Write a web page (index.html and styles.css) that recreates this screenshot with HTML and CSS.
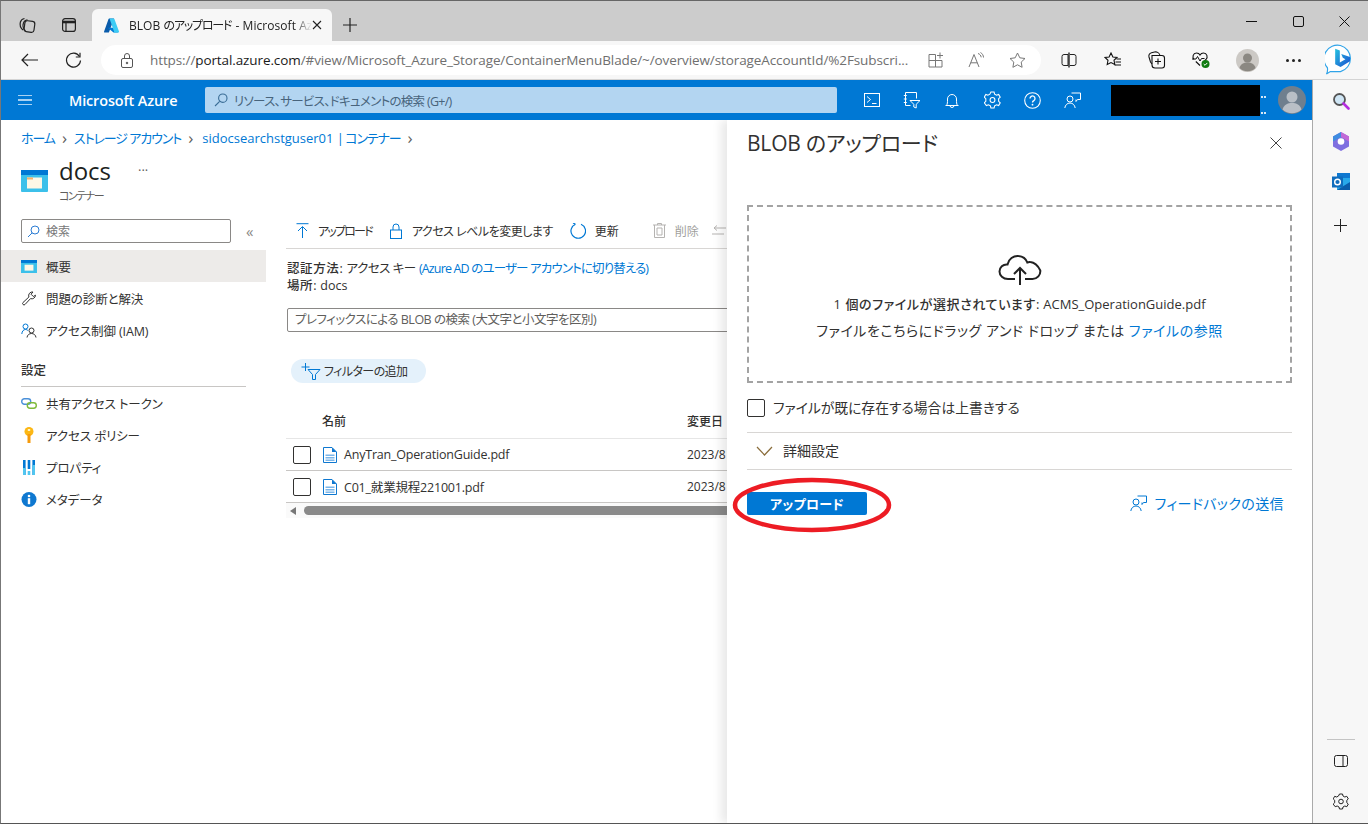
FILE: index.html
```html
<!DOCTYPE html>
<html lang="ja">
<head>
<meta charset="utf-8">
<title>BLOB のアップロード - Microsoft Azure</title>
<link rel="stylesheet" href="styles.css">
</head>
<body>
<div class="window">
  <header class="tabstrip">
    <div class="strip-icon">
      <svg width="18" height="18" viewBox="0 0 18 18" fill="none" stroke="#222" stroke-width="1.2"><rect x="6.5" y="5" width="10" height="11" rx="2.5" transform="rotate(8 11 10)"/><path d="M5 14C2.5 12 1.6 9 2.4 6 3 4 4.600 2.800 6.500 2.500"/><path d="M7.500 15C5.500 13 4.500 10 5.300 7.500 5.800 5.500 7.500 4 9.500 3.800"/></svg>
    </div>
    <div class="strip-icon">
      <svg width="16" height="16" viewBox="0 0 16 16" fill="none" stroke="#222" stroke-width="1.2"><rect x="1.600" y="1.600" width="12.800" height="12.800" rx="2.500"/><path d="M1.600 5h12.800" stroke-width="2.600"/><path d="M5 5v9.400"/></svg>
    </div>
    <div class="tab">
      <svg class="tab-logo" width="16" height="15" viewBox="0 0 18 16"><path d="M6 0h5.300L5.700 15.300a1 1 0 0 1-.9.700H.9a.9.9 0 0 1-.8-1.200L5.100.7A1 1 0 0 1 6 0z" fill="#0a5cab"/><path d="M13.700 10.400H5.200a.4.4 0 0 0-.3.700l5.500 4.600a1 1 0 0 0 .6.300h4.800z" fill="#0078d4"/><path d="M10.800 0a1 1 0 0 1 .9.700l5.200 14.100a.9.900 0 0 1-.8 1.200h-5.600a1 1 0 0 0 .8-1.200L6.200 0z" fill="#3ccbf4"/></svg>
      <span class="tab-title">BLOB <span class="tab-kana">のアップロード</span> - Microsoft Azure</span>
      <svg class="tab-close" width="10" height="10" viewBox="0 0 10 10" stroke="#222" stroke-width="1.100"><path d="M1 1l8 8M9 1l-8 8"/></svg>
    </div>
    <div class="strip-new">
      <svg width="14" height="14" viewBox="0 0 14 14" stroke="#222" stroke-width="1.200"><path d="M7 0v14M0 7h14"/></svg>
    </div>
    <div class="strip-fill"></div>
    <div class="win-btn"><svg width="11" height="11" viewBox="0 0 11 11" stroke="#111"><path d="M0 5.500h11"/></svg></div>
    <div class="win-btn"><svg width="11" height="11" viewBox="0 0 11 11" fill="none" stroke="#111"><rect x=".5" y=".5" width="10" height="10" rx="1.500"/></svg></div>
    <div class="win-btn"><svg width="11" height="11" viewBox="0 0 11 11" stroke="#111"><path d="M.5.500l10 10M10.500.500l-10 10"/></svg></div>
  </header>

  <div class="toolbar">
    <div class="nav-btn"><svg width="17" height="14" viewBox="0 0 17 14" fill="none" stroke="#222" stroke-width="1.200"><path d="M17 7H1M7 1L1 7l6 6"/></svg></div>
    <div class="nav-btn"><svg width="17" height="17" viewBox="0 0 17 17" fill="none" stroke="#222" stroke-width="1.200"><path d="M14.500 4.500A7 7 0 1 0 15.500 8.500"/><path d="M15 .8v4.200h-4.200"/></svg></div>
    <div class="omnibox">
      <svg class="lock" width="12" height="15" viewBox="0 0 12 15" fill="none" stroke="#555"><rect x=".5" y="5.500" width="11" height="9" rx="1.500"/><path d="M3.500 5.500V3a2.500 2.500 0 0 1 5 0v2.500"/><circle cx="6" cy="10" r=".8" fill="#555"/></svg>
      <span class="url"><span class="url-dim">https://</span><span class="url-host">portal.azure.com</span><span class="url-dim">/#view/Microsoft_Azure_Storage/ContainerMenuBlade/~/overview/storageAccountId/%2Fsubscri...</span></span>
      <div class="omni-icons">
        <svg width="16" height="16" viewBox="0 0 16 16" fill="none" stroke="#777"><path d="M1 2.500h6.500V15H1zM7.500 8.500H14V15H7.500zM1 8.500h6.500"/><path d="M12 .5v6M9 3.500h6"/></svg>
        <svg width="17" height="16" viewBox="0 0 17 16" fill="none" stroke="#777"><path d="M1 15L6 2.500 11 15M2.800 10.800h6.400"/><path d="M10 1.500c1.800.5 3 2 3.200 3.800M12.500.500c1.800 1 3 3 3 5"/></svg>
        <svg width="17" height="16" viewBox="0 0 17 16" fill="none" stroke="#777"><path d="M8.500 1l2.300 4.800 5.200.7-3.800 3.600.9 5.200-4.600-2.500-4.600 2.500.9-5.200L1 6.500l5.200-.7z"/></svg>
      </div>
    </div>
    <div class="tool-icons">
      <div class="tool-btn"><svg width="16" height="16" viewBox="0 0 16 16" fill="none" stroke="#222"><path d="M7 2.500H3A2 2 0 0 0 1 4.500v7a2 2 0 0 0 2 2h4zM9 2.500h4a2 2 0 0 1 2 2v7a2 2 0 0 1-2 2H9"/><path d="M8 .5v15" stroke-width="1.400"/></svg></div>
      <div class="tool-btn"><svg width="18" height="16" viewBox="0 0 18 16" fill="none" stroke="#111" stroke-width="1.100"><path d="M7 1l1.900 4 4.100.5-3 2.800.8 4.200L7 10.500l-3.800 2 .8-4.200-3-2.800L5.100 5z"/><path d="M12.500 7H17M11.500 10H17M10.500 13H17"/></svg></div>
      <div class="tool-btn"><svg width="18" height="18" viewBox="0 0 18 18" fill="none" stroke="#111" stroke-width="1.100"><path d="M4 4.500V14a3 3 0 0 0 3 3h7a2.500 2.500 0 0 0 2.500-2.500V7A2.500 2.500 0 0 0 14 4.500z"/><path d="M12 4.500C11.500 2 9 .5 6.500 1L3.500 1.700C1.500 2.200.5 4 1 6l1.500 5 1.500 2"/><path d="M10 7.500v6M7 10.500h6"/></svg></div>
      <div class="tool-btn"><svg width="20" height="20" viewBox="0 0 20 20"><path d="M3 9.500C1 7 2 3 5.500 3c1.800 0 3 1 3.500 2 .6-1 1.800-2 3.500-2C16 3 17.200 7 15 9.500L13.500 11M4.800 11.500 9 15.500" fill="none" stroke="#111" stroke-width="1.100"/><path d="M1 9h4l1.500-2.500L9 11l1.500-2.500h3" fill="none" stroke="#111"/><circle cx="14.500" cy="14" r="4" fill="#107c10"/><path d="M12.700 14l1.300 1.300 2.300-2.400" fill="none" stroke="#fff"/></svg></div>
      <div class="tool-btn profile"><svg width="23" height="23" viewBox="0 0 23 23"><circle cx="11.500" cy="11.500" r="11.500" fill="#ccc9c5"/><circle cx="11.500" cy="9" r="4.500" fill="#8b8882"/><path d="M3.500 19c1-4 4-5.500 8-5.500s7 1.500 8 5.500a11.500 11.500 0 0 1-16 0z" fill="#8b8882"/></svg></div>
      <div class="tool-btn more"><span class="dot"></span><span class="dot"></span><span class="dot"></span></div>
    </div>
    <div class="bing-slot">
      <svg width="31" height="32" viewBox="0 0 32 32"><defs><linearGradient id="bing" x1="0" y1="0" x2="1" y2="1"><stop offset="0" stop-color="#26c2e0"/><stop offset="1" stop-color="#1b4fd0"/></linearGradient></defs><path d="M16 1a14 14 0 0 1 0 27H5.500L1.500 30.500C3 28 2.800 26 2.500 24A14 14 0 0 1 16 1z" fill="#fff" stroke="#2fa3e8" stroke-width="1.200"/><path d="M10.500 4.500l4.800 1.700v12.300l5.800-3.400-2.700-1.300-1.600-4.100 9 3.200v4.500l-9.700 5.900-5.600-3z" fill="url(#bing)"/></svg>
    </div>
  </div>

  <div class="body-row">
    <div class="portal">
      <nav class="topnav">
        <div class="hamburger"><span></span><span></span><span></span></div>
        <div class="brand">Microsoft Azure</div>
        <div class="globalsearch">
          <svg width="14" height="14" viewBox="0 0 14 14" fill="none" stroke="#3a6d96" stroke-width="1.100"><circle cx="8.800" cy="5.200" r="4.200"/><path d="M5.700 8.300L1 13"/></svg>
          <span>リソース、サービス、ドキュメントの検索 (G+/)</span>
        </div>
        <div class="nav-icons">
          <div class="nav-icon"><svg width="16" height="14" viewBox="0 0 16 14" fill="none" stroke="#fff"><rect x=".5" y=".5" width="15" height="13"/><path d="M3 3.500l3.500 3-3.500 3M8 10.500h4.500"/></svg></div>
          <div class="nav-icon"><svg width="18" height="18" viewBox="0 0 18 18" fill="none" stroke="#fff"><path d="M2.500 1.500h11v6M2.500 1.500v13h5M.8 4.500h3M.8 8h3M.8 11.500h3"/><path d="M7 9.500h10l-3.800 3.800v3.700l-2.400-1v-2.700z" fill="#0078d4"/></svg></div>
          <div class="nav-icon"><svg width="14" height="17" viewBox="0 0 14 17" fill="none" stroke="#fff"><path d="M1.500 13.500C2.500 12 2.500 10.500 2.500 7a4.500 4.500 0 0 1 9 0c0 3.500 0 5 1 6.500zM.5 13.500h13M5 13.500a2 2 0 0 0 4 0"/></svg></div>
          <div class="nav-icon"><svg width="17" height="18" viewBox="0 0 16 17" fill="none" stroke="#fff"><circle cx="8" cy="8.500" r="2.300"/><path d="M6.500 1h3l.5 2 1.800 1 2-.7 1.500 2.600-1.500 1.400v2.400l1.500 1.400-1.500 2.600-2-.7-1.800 1-.5 2h-3l-.5-2-1.800-1-2 .7L.2 11.100l1.500-1.400V7.300L.2 5.900l1.500-2.600 2 .7L5.500 3z"/></svg></div>
          <div class="nav-icon"><svg width="17" height="17" viewBox="0 0 17 17" fill="none" stroke="#fff" stroke-width="1.100"><circle cx="8.500" cy="8.500" r="7.800"/><path d="M6 6.500a2.500 2.500 0 1 1 3.800 2.100c-.9.500-1.300 1-1.300 2" stroke-width="1.300"/><circle cx="8.500" cy="12.700" r=".9" fill="#fff" stroke="none"/></svg></div>
          <div class="nav-icon"><svg width="17" height="17" viewBox="0 0 17 17" fill="none" stroke="#fff"><circle cx="6" cy="7" r="3"/><path d="M.8 16c.4-3 2.500-5 5.200-5s4.800 2 5.200 5M7.500 1h9v6.500h-3L12 9.500V7.500"/></svg></div>
        </div>
        <div class="account">
          <div class="redacted"></div>
          <div class="acct-dots"><span></span><span></span></div>
        </div>
        <div class="avatar"><svg width="28" height="28" viewBox="0 0 28 28"><circle cx="14" cy="14" r="14" fill="#6f7f8e"/><circle cx="14" cy="11" r="5.500" fill="#b9bfc6"/><path d="M4.500 23.500C6 18.500 9.500 17 14 17s8 1.500 9.500 6.500a14 14 0 0 1-19 0z" fill="#b9bfc6"/></svg></div>
      </nav>

      <main class="workspace">
        <div class="breadcrumb">
          <a class="crumb-kana">ホーム</a><i>›</i><a class="crumb-kana">ストレージ アカウント</a><i class="crumb-gap">›</i><a class="crumb-last">sidocsearchstguser01 <span class="crumb-kana">| コンテナー</span></a><i>›</i>
        </div>
        <div class="pagehead">
          <svg class="container-icon" width="27" height="22" viewBox="0 0 27 22"><rect width="27" height="22" rx="1" fill="#3cc0ea"/><rect width="27" height="5" fill="#0078d4"/><rect x="6" y="7.500" width="15" height="11" fill="#fdf7e6"/><rect x="6" y="7.500" width="6" height="2" fill="#f6b26b"/></svg>
          <div class="head-text">
            <div class="head-title"><span class="doc-name">docs</span><span class="head-more">···</span></div>
            <div class="head-sub">コンテナー</div>
          </div>
        </div>
        <div class="split">
          <aside class="sidemenu">
            <div class="side-search-row">
              <div class="side-search">
                <svg width="13" height="13" viewBox="0 0 13 13" fill="none" stroke="#2b7cd3"><circle cx="8" cy="5" r="4"/><path d="M5.200 7.800L1 12"/></svg>
                <span>検索</span>
              </div>
              <span class="collapse">«</span>
            </div>
            <div class="menu">
              <div class="menu-item active"><svg width="15" height="13" viewBox="0 0 27 22"><rect width="27" height="22" fill="#3cc0ea"/><rect width="27" height="5" fill="#0078d4"/><rect x="6" y="8" width="15" height="10" fill="#fdf7e6"/></svg><span>概要</span></div>
              <div class="menu-item"><svg width="15" height="15" viewBox="0 0 15 15" fill="none" stroke="#333"><path d="M14 4.200a3.700 3.700 0 0 1-5 3.400L3.500 13.500a1.400 1.400 0 0 1-2-2L7.400 6A3.700 3.700 0 0 1 11.500 1L9.500 3.200l2.300 2.300z"/></svg><span>問題の診断と解決</span></div>
              <div class="menu-item"><svg width="16" height="15" viewBox="0 0 16 15" fill="none" stroke="#0078d4"><circle cx="4.500" cy="3.500" r="2.500"/><path d="M.8 11c.2-2.800 1.700-4.500 3.700-4.500 1 0 1.800.3 2.400 1"/><circle cx="10.500" cy="7.500" r="2.500" stroke="#333"/><path d="M6 14.500c.3-2.500 2.200-4 4.500-4s4.200 1.500 4.500 4" stroke="#333"/></svg><span>アクセス制御 (IAM)</span></div>
            </div>
            <div class="menu-head">設定</div>
            <div class="menu">
              <div class="menu-item"><svg width="16" height="11" viewBox="0 0 16 11" fill="none" stroke-width="1.400"><rect x=".7" y=".7" width="9" height="5.500" rx="2.700" stroke="#4a90d9"/><rect x="6.300" y="4.700" width="9" height="5.500" rx="2.700" stroke="#7fba3a"/></svg><span>共有アクセス トークン</span></div>
              <div class="menu-item"><svg width="15" height="16" viewBox="0 0 15 16"><circle cx="7.500" cy="4.500" r="4.500" fill="#fcb714"/><rect x="6" y="7" width="3" height="9" fill="#f59a0c"/><rect x="6.300" y="2" width="2.400" height="2" fill="#fff3c9"/></svg><span>アクセス ポリシー</span></div>
              <div class="menu-item"><svg width="14" height="15" viewBox="0 0 14 15"><rect x="1" width="2.600" height="15" fill="#0078d4"/><rect x="1" y="8" width="2.600" height="7" fill="#50c7f0"/><rect x="5.700" width="2.600" height="9" fill="#0078d4"/><rect x="5.700" y="11" width="2.600" height="4" fill="#50c7f0"/><rect x="10.400" width="2.600" height="15" fill="#0078d4"/><rect x="10.400" y="5" width="2.600" height="10" fill="#50c7f0"/></svg><span>プロパティ</span></div>
              <div class="menu-item"><svg width="15" height="15" viewBox="0 0 15 15"><circle cx="7.500" cy="7.500" r="7.500" fill="#0f78d0"/><circle cx="7.500" cy="4" r="1.300" fill="#fff"/><rect x="6.300" y="6.200" width="2.400" height="6" fill="#fff"/></svg><span>メタデータ</span></div>
            </div>
          </aside>

          <section class="maincol">
            <div class="cmdbar">
              <div class="cmd"><svg width="13" height="15" viewBox="0 0 13 15" fill="none" stroke="#0078d4"><path d="M.5.700h12M6.500 15V4M2 8l4.500-4.500L11 8"/></svg><span class="tight-upload">アップロード</span></div>
              <div class="cmd"><svg width="14" height="16" viewBox="0 0 14 16" fill="none" stroke="#0078d4"><rect x="1.500" y="7" width="11" height="8.500"/><path d="M4 7V4a3 3 0 0 1 6 0v3"/></svg><span class="tight-level">アクセス レベルを変更します</span></div>
              <div class="cmd"><svg width="16" height="16" viewBox="0 0 16 16" fill="none" stroke="#0078d4" stroke-width="1.200"><path d="M5.500 1.200a7.300 7.300 0 1 0 5.500 0M5.500 1.200L3 0"/></svg><span>更新</span></div>
              <div class="cmd-sep"></div>
              <div class="cmd disabled"><svg width="13" height="15" viewBox="0 0 13 15" fill="none" stroke="#b5b3b1"><path d="M0 2h13M4.500 2V.5h4V2M1.500 2v12.500h10V2M4 5h5v7H4z"/></svg><span>削除</span></div>
              <div class="cmd disabled"><svg width="14" height="12" viewBox="0 0 14 12" fill="none" stroke="#b5b3b1"><path d="M14 3H2M5 .5 2 3l3 2.500M0 9h12"/></svg></div>
            </div>
            <div class="info">
              <div><b>認証方法:</b> <span class="info-kana">アクセス キー</span> <a class="info-link">(Azure AD のユーザー アカウントに切り替える)</a></div>
              <div><b>場所:</b> docs</div>
            </div>
            <div class="prefix">プレフィックスによる BLOB の検索 (大文字と小文字を区別)</div>
            <div class="filter"><svg width="20" height="17" viewBox="0 0 20 17" fill="none" stroke="#0078d4"><path d="M4.500 0v8M.5 4h8"/><path d="M7 6.500h12l-4.500 5v5h-3v-5z"/></svg><span>フィルターの追加</span></div>
            <div class="table">
              <div class="thead"><span class="col-name">名前</span><span class="col-date">変更日</span></div>
              <div class="trow">
                <span class="check"></span>
                <svg class="file" width="14" height="16" viewBox="0 0 14 16"><path d="M.5.500h8.500l4.500 4.500v10.500H.5z" fill="#fff" stroke="#0f78d0"/><path d="M9 .5V5h4.500z" fill="#0f78d0"/><path d="M2.500 7.500h9v1.500h-9zM2.500 10h9v1.500h-9zM2.500 12.500h9V14h-9z" fill="#7ab6ea"/></svg>
                <span class="fname">AnyTran_OperationGuide.pdf</span>
                <span class="fdate">2023/8</span>
              </div>
              <div class="trow">
                <span class="check"></span>
                <svg class="file" width="14" height="16" viewBox="0 0 14 16"><path d="M.5.500h8.500l4.500 4.500v10.500H.5z" fill="#fff" stroke="#0f78d0"/><path d="M9 .5V5h4.500z" fill="#0f78d0"/><path d="M2.500 7.500h9v1.500h-9zM2.500 10h9v1.500h-9zM2.500 12.500h9V14h-9z" fill="#7ab6ea"/></svg>
                <span class="fname">C01_就業規程221001.pdf</span>
                <span class="fdate">2023/8</span>
              </div>
              <div class="hscroll"><span class="arrow"></span><span class="thumb"></span></div>
            </div>
          </section>
        </div>

        <aside class="blade">
          <div class="blade-head">
            <h1>BLOB のアップロード</h1>
            <svg width="12" height="12" viewBox="0 0 12 12" stroke="#444"><path d="M.5.500l11 11M11.500.500l-11 11"/></svg>
          </div>
          <div class="dropzone">
            <svg width="44" height="32" viewBox="0 0 44 32" fill="none" stroke="#222" stroke-width="2"><path d="M17 25H10C5 25 1.500 21.500 1.500 17.500S5 10 9.500 10.500C10.500 5 15.500 1.500 20.500 2c4 .3 7.500 3 8.800 6.500 1-.4 2-.5 3-.4 4 .3 7.500 3.400 10 8.400.4 4.500-3 8.500-7.800 8.500H27"/><path d="M22 31V14M16 20l6-6 6 6"/></svg>
            <div class="selected"><b>1 個のファイルが選択されています:</b> ACMS_OperationGuide.pdf</div>
            <div class="dropline">ファイルをこちらにドラッグ アンド ドロップ または <a>ファイルの参照</a></div>
          </div>
          <div class="overwrite"><span class="check"></span><span class="lift">ファイルが既に存在する場合は上書きする</span></div>
          <div class="advanced">
            <svg width="17" height="10" viewBox="0 0 17 10" fill="none" stroke="#8a6d3b" stroke-width="1.200"><path d="M1 1l7.500 8L16 1"/></svg>
            <span class="lift">詳細設定</span>
          </div>
          <div class="blade-foot">
            <button class="primary">アップロード</button>
            <div class="feedback"><svg width="17" height="17" viewBox="0 0 17 17" fill="none" stroke="#0078d4"><circle cx="6" cy="7" r="3"/><path d="M.8 16c.4-3 2.500-5 5.200-5s4.800 2 5.200 5M7.500 1h9v6.500h-3L12 9.500V7.500"/></svg><span class="lift">フィードバックの送信</span></div>
          </div>
          <svg class="annotation" width="162" height="58" viewBox="0 0 162 58" fill="none"><ellipse cx="81" cy="29" rx="77" ry="25" stroke="#ed1c24" stroke-width="4.500"/></svg>
        </aside>
      </main>
    </div>

    <aside class="edgebar">
      <div class="edge-top">
        <div class="edge-btn"><svg width="18" height="18" viewBox="0 0 18 18" fill="none"><circle cx="7.500" cy="7.500" r="5.500" fill="#cfe6f5" stroke="#555" stroke-width="1.800"/><path d="M11.500 11.500l5 5" stroke="#b42fe0" stroke-width="2.600" stroke-linecap="round"/></svg></div>
        <div class="edge-btn"><svg width="18" height="19" viewBox="0 0 18 19"><path d="M9 0l8 4.500v10L9 19l-8-4.500v-10z" fill="#7f6fe0"/><path d="M9 0l8 4.500v5L9 5z" fill="#c26ad6"/><path d="M1 4.500l8-4.500v5L1 9.500z" fill="#3f8de0"/><circle cx="9" cy="9.500" r="3.300" fill="#fff"/></svg></div>
        <div class="edge-btn outlook"><svg width="18" height="17" viewBox="0 0 18 17"><rect x="5" y="0" width="13" height="17" fill="#28a8ea"/><rect x="5" y="0" width="13" height="5" fill="#0f78d0"/><path d="M5 17l13-8v8z" fill="#0a5cab"/><rect x="0" y="3.500" width="11" height="11" fill="#0f6cbd"/><circle cx="5.500" cy="9" r="2.800" fill="none" stroke="#fff" stroke-width="1.400"/></svg></div>
        <div class="edge-btn add"><svg width="13" height="13" viewBox="0 0 13 13" stroke="#222"><path d="M6.500 0v13M0 6.500h13"/></svg></div>
      </div>
      <div class="edge-bottom">
        <div class="edge-rule"></div>
        <div class="edge-btn"><svg width="14" height="12" viewBox="0 0 14 12" fill="none" stroke="#222"><rect x=".5" y=".5" width="13" height="11" rx="2"/><path d="M9 .5v11"/></svg></div>
        <div class="edge-btn"><svg width="16" height="17" viewBox="0 0 16 17" fill="none" stroke="#222"><circle cx="8" cy="8.500" r="2.300"/><path d="M6.500 1h3l.5 2 1.800 1 2-.7 1.500 2.600-1.500 1.400v2.400l1.500 1.400-1.500 2.600-2-.7-1.800 1-.5 2h-3l-.5-2-1.800-1-2 .7L.2 11.100l1.500-1.400V7.300L.2 5.900l1.500-2.600 2 .7L5.500 3z"/></svg></div>
      </div>
    </aside>
  </div>
</div>
</body>
</html>
```
FILE: styles.css
```css
* { box-sizing: border-box; }
html, body { margin: 0; padding: 0; }
body {
  width: 1368px; height: 824px; overflow: hidden;
  font-family: "Open Sans", "Noto Sans CJK JP", sans-serif;
  font-feature-settings: "palt";
  font-size: 12px; color: #323130;
}
a { color: #0078d4; text-decoration: none; }
svg { flex: none; display: block; }

.window {
  width: 1368px; height: 824px; display: flex; flex-direction: column;
  border-top: 1px solid #666; border-left: 1px solid #777; border-bottom: 1px solid #555;
  background: #f7f7f7;
}

.tabstrip { height: 40px; background: #ccc; display: flex; align-items: flex-end; padding-left: 5px; flex: none; }
.strip-icon { width: 42px; height: 32px; display: flex; align-items: center; justify-content: center; }
.tab {
  width: 240px; height: 32px; margin-left: 2px; background: #f7f7f7; border-radius: 6px 6px 0 0;
  display: flex; align-items: center; padding: 0 8px 0 12px;
}
.tab-title {
  width: 183px; margin-left: 9px; white-space: nowrap; overflow: hidden; font-size: 12px; color: #222; letter-spacing: .05px;
  -webkit-mask-image: linear-gradient(90deg, #000 90%, transparent);
  mask-image: linear-gradient(90deg, #000 90%, transparent);
}
.tab-kana { letter-spacing: -1.200px; margin-right: 1px; }
.strip-new { width: 36px; height: 32px; display: flex; align-items: center; justify-content: center; }
.strip-fill { flex: 1; }
.win-btn { width: 46.500px; height: 40px; display: flex; align-items: center; justify-content: center; }

.toolbar { height: 39px; flex: none; display: flex; align-items: center; padding-left: 6px; border-bottom: 1px solid #d4d4d4; }
.nav-btn { width: 44px; height: 30px; display: flex; align-items: center; justify-content: center; }
.omnibox {
  width: 940px; height: 30px; margin-left: 6px; background: #fff; border-radius: 15px;
  display: flex; align-items: center; padding-left: 20px;
}
.url { margin-left: 17px; width: 762px; white-space: nowrap; overflow: hidden; font-family: "Open Sans", sans-serif; font-size: 13.500px; letter-spacing: -.1px; }
.url-dim { color: #6f6f6f; }
.url-host { color: #1a1a1a; }
.omni-icons { display: flex; align-items: center; gap: 24px; margin-left: 16px; }
.tool-icons { display: flex; margin-left: 6px; }
.tool-btn { width: 44px; height: 30px; display: flex; align-items: center; justify-content: center; gap: 3px; }
.profile { margin-left: 2px; }
.more { margin-left: 2px; }
.dot { width: 3px; height: 3px; border-radius: 50%; background: #222; }
.bing-slot { height: 36px; width: 50px; display: flex; align-items: center; justify-content: center; }

.body-row { flex: 1; display: flex; min-height: 0; }
.portal { width: 1311px; flex: none; display: flex; flex-direction: column; background: #fff; }

.topnav { height: 40px; flex: none; background: #0078d4; display: flex; align-items: center; padding-left: 17px; }
.hamburger { width: 14px; display: flex; flex-direction: column; gap: 3px; }
.hamburger span { height: 1.500px; background: #a9d2f2; }
.brand { margin-left: 37px; width: 136px; color: #fff; font-weight: 600; font-size: 14.400px; white-space: nowrap; letter-spacing: -.1px; }
.globalsearch {
  width: 632px; height: 26px; background: #b3d5f1; border-radius: 2px; display: flex; align-items: center;
  padding-left: 9px; gap: 6px; color: #48647c; font-size: 12.500px; white-space: nowrap; letter-spacing: -.7px;
}
.nav-icons { display: flex; margin-left: 15px; }
.nav-icon { width: 40px; height: 40px; display: flex; align-items: center; justify-content: center; }
.account { margin-left: 19px; display: flex; height: 31px; }
.redacted { width: 149px; height: 31px; background: #000; }
.acct-dots { width: 7px; display: flex; flex-direction: column; justify-content: space-between; padding: 11px 0 2px 1px; }
.acct-dots span { height: 2px; width: 6px; background: repeating-linear-gradient(90deg, #d5e8f7 0 2px, transparent 2px 3px); }
.avatar { margin-left: 11px; }

.workspace { position: relative; flex: 1; min-height: 0; overflow: hidden; }
.breadcrumb { height: 36px; display: flex; align-items: center; padding: 0 0 2px 20px; font-size: 13px; white-space: nowrap; }
.breadcrumb i { font-style: normal; color: #605e5c; margin: 0 7px; font-size: 17px; line-height: 17px; }
.breadcrumb .crumb-gap { margin-right: 9px; }
.crumb-kana { letter-spacing: -1.100px; }
.crumb-last { letter-spacing: 0; }
.pagehead { height: 48px; display: flex; padding-left: 20px; }
.container-icon { margin-top: 14px; }
.head-text { margin-left: 11px; }
.head-title { height: 32px; display: flex; align-items: center; padding-bottom: 4px; }
.doc-name { font-size: 24px; color: #201f1e; width: 79px; font-weight: 400; }
.head-more { font-size: 13px; color: #605e5c; letter-spacing: 0; }
.head-sub { font-size: 11px; line-height: 16px; color: #605e5c; letter-spacing: -1.500px; }

.split { display: flex; height: 400px; }
.sidemenu { width: 265px; flex: none; padding-top: 15px; }
.side-search-row { display: flex; align-items: center; padding-left: 20px; }
.side-search {
  width: 210px; height: 24px; border: 1px solid #8a8886; border-radius: 2px;
  display: flex; align-items: center; gap: 6px; padding-left: 5px; color: #777; font-size: 12px;
}
.collapse { margin-left: 15px; color: #8a8886; font-size: 15px; }
.menu { margin-top: 7px; }
.menu-head + .menu { margin-top: 0; }
.menu-item { height: 32px; display: flex; align-items: center; padding-left: 20px; font-size: 12.500px; white-space: nowrap; letter-spacing: -.1px; }
.menu-item svg { width: 16px; }
.menu-item span { margin-left: 9px; }
.menu-item.active { background: #edebe9; }
.menu-head {
  margin: 8px 20px 0; height: 33px; line-height: 34px; border-bottom: 1px solid #c8c6c4; font-size: 12.500px; font-weight: 500;
}

.maincol { width: 441px; flex: none; padding-top: 9px; margin-left: 20px; min-width: 0; white-space: nowrap; }
.cmdbar { height: 36px; border-bottom: 1px solid #d8d6d4; display: flex; align-items: center; padding-left: 10px; overflow: hidden; }
.cmd { display: flex; align-items: center; margin-right: 17px; font-size: 12px; gap: 9px; }
.tight-upload { letter-spacing: -1.800px; }
.tight-level { letter-spacing: -.5px; }
.cmd.disabled { color: #a19f9d; margin-right: 13px; }
.cmd-sep { width: 1px; height: 18px; background: #d8d6d4; margin-right: 17px; margin-left: 0; }
.info { padding: 11px 0 0 1px; line-height: 17px; font-size: 12.500px; }
.info b { font-weight: 500; letter-spacing: .6px; }
.info-kana { letter-spacing: -.5px; }
.info-link { letter-spacing: -.85px; }
.prefix {
  margin-top: 14px; margin-left: 1px; width: 460px; height: 24px; line-height: 22px; border: 1px solid #8a8886; border-radius: 2px; padding-left: 7px; color: #605e5c; font-size: 12.500px; letter-spacing: -.5px;
}
.filter {
  margin: 27px 0 0 5px; width: 135px; height: 24px; border-radius: 12px; background: #e4f1fb;
  display: flex; align-items: center; padding-left: 10px; font-size: 12px;
}
.filter span { margin-left: 3px; letter-spacing: -.6px; }
.table { margin-top: 21px; width: 441px; overflow: hidden; }
.thead { height: 35px; border-bottom: 1px solid #e6e6e6; display: flex; align-items: center; padding-left: 36px; font-weight: 500; }
.col-name { width: 365px; }
.col-date { flex: none; }
.trow { height: 32px; border-bottom: 1px solid #c8c6c4; display: flex; align-items: center; padding-left: 7px; font-size: 12.500px; }
.check { width: 18px; height: 18px; border: 1px solid #323130; border-radius: 2px; display: block; flex: none; background: #fff; }
.file { margin-left: 12px; }
.fname { margin-left: 7px; width: 343px; flex: none; color: #323130; letter-spacing: -.2px; }
.fdate { flex: none; font-size: 12px; }
.hscroll { height: 15px; display: flex; align-items: center; background: #fafafa; padding-left: 4px; }
.arrow { width: 0; height: 0; border: 4px solid transparent; border-right: 6px solid #777; border-left: 0; }
.thumb { margin-left: 8px; width: 440px; height: 9px; border-radius: 5px; background: #8a8a8a; flex: none; }

.blade {
  position: absolute; top: 0; bottom: 0; left: 726px; width: 585px; background: #fff;
  padding: 0 20px; box-shadow: -6px 0 9px rgba(0,0,0,.09);
}
.blade-head { height: 46px; display: flex; align-items: center; justify-content: space-between; padding: 0 10px 0 0; }
.blade-head h1 { margin: 0; font-size: 21px; font-weight: 400; color: #323130; line-height: 46px; white-space: nowrap; letter-spacing: -.2px; }
.dropzone {
  margin-top: 39px; height: 178px; border: 2px dashed #a3a3a3; display: flex; flex-direction: column; align-items: center; padding-top: 47px;
}
.selected { margin-top: 8px; line-height: 20px; font-size: 13px; white-space: nowrap; }
.selected b { font-weight: 500; letter-spacing: .6px; }
.dropline { margin-top: 7px; line-height: 20px; font-size: 14px; white-space: nowrap; letter-spacing: .55px; }
.overwrite { margin-top: 16px; height: 18px; display: flex; align-items: center; gap: 8px; font-size: 13.800px; white-space: nowrap; }
.lift { position: relative; top: -1px; }
.advanced { margin-top: 15px; height: 38px; border-top: 1px solid #d8d6d4; border-bottom: 1px solid #d8d6d4; display: flex; align-items: center; padding-left: 9px; gap: 10px; font-size: 14px; }
.advanced svg { margin-top: -1px; }
.blade-foot { margin-top: 22px; display: flex; align-items: center; justify-content: space-between; padding-right: 8px; }
.primary {
  width: 120px; height: 23px; border: 0; border-radius: 2px; background: #0078d4; color: #fff; font: inherit; font-weight: 700; font-size: 13px; letter-spacing: .3px; padding: 0;
}
.feedback { display: flex; align-items: center; gap: 8px; color: #0078d4; font-size: 14px; letter-spacing: .4px; white-space: nowrap; }
.annotation { position: absolute; left: 4px; top: 356px; }

.edgebar { flex: 1; border-left: 1px solid #aaa; display: flex; flex-direction: column; justify-content: space-between; align-items: center; }
.edge-top { width: 100%; }
.edge-top .edge-btn { height: 41px; }
.edge-top .outlook { height: 39px; }
.edge-top .add { height: 48px; }
.edge-bottom { width: 100%; padding-bottom: 2px; display: flex; flex-direction: column; align-items: center; }
.edge-rule { width: 28px; height: 1px; background: #c4c4c4; margin-bottom: 1px; }
.edge-btn { width: 100%; height: 40px; display: flex; align-items: center; justify-content: center; }
```
